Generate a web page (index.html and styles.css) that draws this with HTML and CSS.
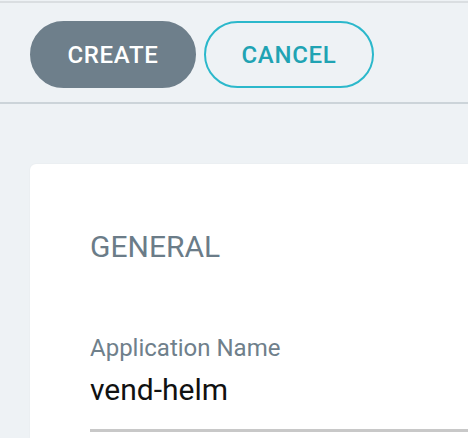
FILE: index.html
```html
<!DOCTYPE html>
<html>
<head>
<meta charset="utf-8">
<link rel="stylesheet" href="styles.css">
</head>
<body>
<div class="toolbar">
  <button class="btn btn-create">CREATE</button>
  <button class="btn btn-cancel">CANCEL</button>
</div>
<main class="content">
  <section class="card">
    <h2 class="section-title">GENERAL</h2>
    <div class="field">
      <label class="field-label">Application Name</label>
      <div class="field-input">vend-helm</div>
    </div>
  </section>
</main>
</body>
</html>
```
FILE: styles.css
```css
html, body {
  margin: 0;
  padding: 0;
  background: #eef2f5;
  font-family: Roboto, "Liberation Sans", sans-serif;
  height: 100%;
  overflow: hidden;
}
body {
  display: flex;
  flex-direction: column;
}
.toolbar {
  flex: none;
  margin-top: 1px;
  border-top: 2px solid #dadee1;
  border-bottom: 2px solid #ccd4d9;
  background: #eef2f5;
  height: 103px;
  box-sizing: border-box;
  padding: 18px 30px 0;
  display: flex;
  align-items: flex-start;
  gap: 8px;
}
.btn {
  height: 67px;
  box-sizing: border-box;
  border-radius: 34px;
  padding: 0 35px;
  font-family: Roboto, "Liberation Sans", sans-serif;
  font-size: 24px;
  font-weight: 500;
  letter-spacing: 0.7px;
  display: flex;
  align-items: center;
  justify-content: center;
  cursor: pointer;
}
.btn-create {
  background: #6e7f8b;
  color: #fff;
  border: 2px solid #6e7f8b;
  width: 166px;
}
.btn-cancel {
  background: transparent;
  color: #20a3b3;
  border: 2px solid #2bb8cb;
  width: 170px;
}
.content {
  flex: 1;
  min-height: 0;
  display: flex;
  flex-direction: column;
  padding: 60px 0 0 30px;
}
.card {
  flex: 1;
  min-height: 0;
  overflow: hidden;
  background: #fff;
  border-radius: 6px 0 0 0;
  box-shadow: 0 0 2px rgba(0, 0, 0, 0.05);
  padding: 65px 0 0 60px;
}
.section-title {
  margin: 0;
  font-size: 30px;
  line-height: 36px;
  font-weight: 400;
  color: #6b7c88;
}
.field {
  margin-top: 69px;
}
.field-label {
  display: block;
  font-size: 24px;
  line-height: 28px;
  color: #6f808b;
}
.field-input {
  font-size: 30px;
  line-height: 36px;
  color: #111;
  margin-top: 10px;
  padding-bottom: 21px;
  border-bottom: 3px solid #c8c8c8;
}
```
